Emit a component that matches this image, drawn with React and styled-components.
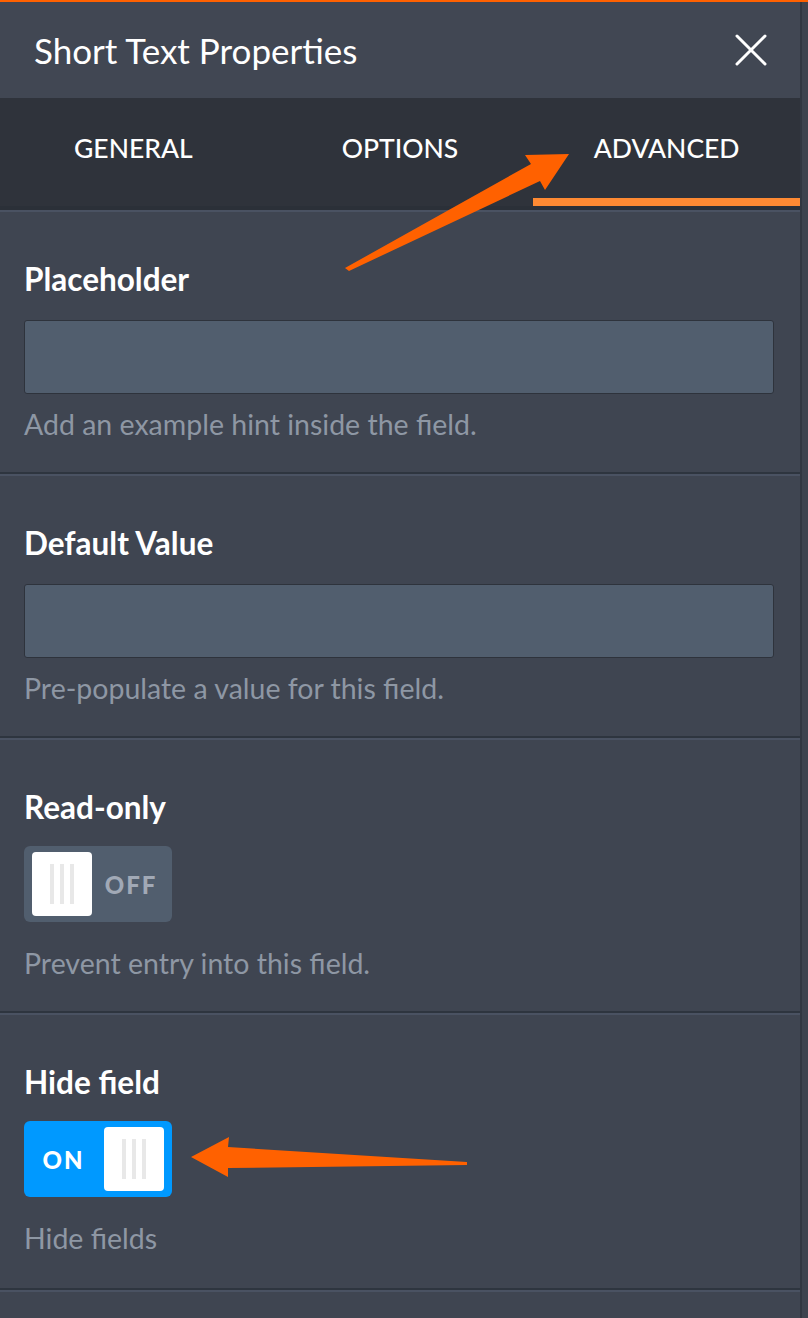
import React from 'react';
import styled, { createGlobalStyle } from 'styled-components';

const GlobalStyle = createGlobalStyle`
  * { box-sizing: border-box; }
  body {
    margin: 0;
    background: #3f4551;
    font-family: "Lato", "Noto Sans", sans-serif;
  }
`;

const Page = styled.div`
  position: relative;
  width: 808px;
  min-height: 1318px;
  display: flex;
  border-top: 2px solid #ff6100;
  background: #3f4551;
  overflow: hidden;
`;

const Panel = styled.div`
  width: 800px;
  display: flex;
  flex-direction: column;
`;

const RightEdge = styled.div`
  flex: 1;
  border-left: 2px solid #313741;
  background: #3d434e;
`;

const Header = styled.header`
  height: 96px;
  padding: 0 33px 0 34px;
  display: flex;
  align-items: center;
  justify-content: space-between;
  background: #414753;
`;

const Title = styled.h1`
  margin: 0;
  font-size: 35px;
  line-height: 40px;
  font-weight: 400;
  color: #ffffff;
`;

const CloseButton = styled.button`
  width: 32px;
  height: 32px;
  padding: 0;
  border: 0;
  background: none;
  display: flex;
  align-items: center;
  justify-content: center;
  cursor: pointer;
`;

const Tabs = styled.nav`
  height: 112px;
  display: grid;
  grid-template-columns: repeat(3, 1fr);
  background: #2f333b;
  border-bottom: 4px solid #2b3038;
`;

const Tab = styled.div`
  display: flex;
  align-items: center;
  justify-content: center;
  padding-bottom: ${p => (p.$active ? '0' : '8px')};
  border-bottom: ${p => (p.$active ? '8px solid #ff8a33' : '0')};
  font-size: 26.5px;
  font-weight: 500;
  color: #ffffff;
  text-transform: uppercase;
`;

const Section = styled.section`
  padding: 51px 26px ${p => p.$bottom || 33}px 24px;
  border-top: 2px solid #4a5262;
  border-bottom: 2px solid #2e353f;
  &:last-child {
    flex: 1;
    border-bottom: 0;
  }
`;

const Label = styled.div`
  font-size: 31.5px;
  line-height: 32px;
  font-weight: 700;
  color: #ffffff;
  margin-bottom: ${p => p.$gap || 25}px;
`;

const TextInput = styled.input`
  display: block;
  width: 100%;
  height: 74px;
  border: 1px solid #2e333c;
  border-radius: 3px;
  background: #515e6e;
  color: #ffffff;
  font-family: inherit;
  font-size: 26px;
  padding: 0 16px;
  outline: none;
`;

const Hint = styled.div`
  margin-top: ${p => p.$gap || 15}px;
  font-size: 28.5px;
  line-height: 30px;
  color: #8e97a4;
`;

const Toggle = styled.button`
  width: 148px;
  height: 76px;
  padding: 6px 8px;
  border: 0;
  border-radius: 6px;
  display: flex;
  flex-direction: ${p => (p.$on ? 'row-reverse' : 'row')};
  align-items: center;
  background: ${p => (p.$on ? '#0099ff' : '#515e6e')};
  cursor: pointer;
`;

const Knob = styled.span`
  width: 60px;
  height: 64px;
  border-radius: 4px;
  background: #ffffff;
  display: flex;
  align-items: center;
  justify-content: center;
  gap: 6px;
`;

const Grip = styled.span`
  width: 4px;
  height: 40px;
  background: #e8e8e8;
`;

const ToggleText = styled.span`
  flex: 1;
  text-align: center;
  padding-left: ${p => (p.$on ? '0' : '6px')};
  padding-right: ${p => (p.$on ? '9px' : '0')};
  font-family: "Lato", sans-serif;
  font-size: 24px;
  font-weight: 900;
  letter-spacing: 2px;
  color: ${p => (p.$on ? '#ffffff' : '#a1a9b6')};
`;

const Overlay = styled.svg`
  position: absolute;
  left: 0;
  top: -2px;
  pointer-events: none;
`;

function Switch({ on }) {
  return (
    <Toggle $on={on}>
      <Knob>
        <Grip />
        <Grip />
        <Grip />
      </Knob>
      <ToggleText $on={on}>{on ? 'ON' : 'OFF'}</ToggleText>
    </Toggle>
  );
}

export default function App() {
  return (
    <>
      <GlobalStyle />
      <Page>
        <Panel>
          <Header>
            <Title>Short Text Properties</Title>
            <CloseButton aria-label="Close">
              <svg width="32" height="32" viewBox="0 0 32 32">
                <path d="M2 2 L30 30 M30 2 L2 30" stroke="#fff" strokeWidth="3" strokeLinecap="round" />
              </svg>
            </CloseButton>
          </Header>
          <Tabs>
            <Tab>General</Tab>
            <Tab>Options</Tab>
            <Tab $active>Advanced</Tab>
          </Tabs>
          <Section>
            <Label>Placeholder</Label>
            <TextInput type="text" />
            <Hint>Add an example hint inside the field.</Hint>
          </Section>
          <Section>
            <Label>Default Value</Label>
            <TextInput type="text" />
            <Hint>Pre-populate a value for this field.</Hint>
          </Section>
          <Section>
            <Label $gap={23}>Read-only</Label>
            <Switch on={false} />
            <Hint $gap={26}>Prevent entry into this field.</Hint>
          </Section>
          <Section $bottom={35}>
            <Label $gap={23}>Hide field</Label>
            <Switch on />
            <Hint $gap={26}>Hide fields</Hint>
          </Section>
          <Section />
        </Panel>
        <RightEdge />
        <Overlay width="808" height="1318" viewBox="0 0 808 1318">
          <polygon
            fill="#ff6100"
            points="569,154 525,155 531,164 345,268 349,271 540,181 545,190"
          />
          <polygon
            fill="#ff6100"
            points="191,1157 229,1137 228,1147 467,1162 467,1165 228,1168 228,1177"
          />
        </Overlay>
      </Page>
    </>
  );
}
